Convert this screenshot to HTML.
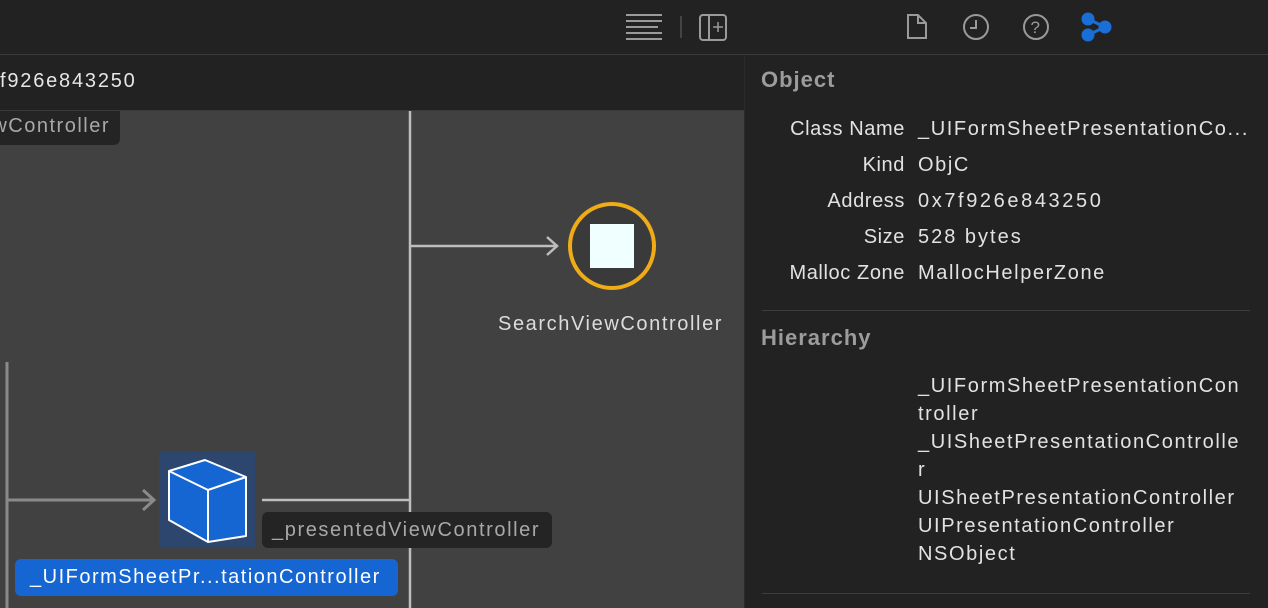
<!DOCTYPE html>
<html><head><meta charset="utf-8"><style>
body{margin:0;width:1268px;height:608px;background:#222;overflow:hidden;position:relative;font-family:"Liberation Sans",sans-serif;letter-spacing:1.5px}
.a{position:absolute}
.lbl{position:absolute;right:363px;text-align:right;color:#e2e2e2;font-size:20px;letter-spacing:0.6px}
.val{position:absolute;left:918px;color:#e2e2e2;font-size:20px;white-space:nowrap;letter-spacing:1.6px}
.h{position:absolute;left:918px;color:#e2e2e2;font-size:20px;line-height:28px;letter-spacing:1.6px;white-space:nowrap}
</style></head><body>
<div class="a" style="left:0;top:0;width:745px;height:54px;background:#222"></div>
<div class="a" style="left:0;top:54px;width:1268px;height:1px;background:#3a3a3a"></div>
<div class="a" style="left:0;top:55px;width:745px;height:55px;background:#222"></div>
<div class="a" style="left:0;top:110px;width:745px;height:1px;background:#3a3a3a"></div>
<div class="a" style="left:0;top:70px;color:#e6e6e6;font-size:20px;letter-spacing:1.8px">f926e843250</div>
<div class="a" style="left:744px;top:55px;width:1px;height:553px;background:#2c2c2c"></div>
<div class="a" style="left:0;top:111px;width:744px;height:497px;background:#414141"></div>
<div class="a" style="left:0;top:111px;width:120px;height:34px;background:#242424;border-radius:0 0 6px 0;color:#a8a8a8;font-size:20px;line-height:30px;text-align:right;padding-right:10px;box-sizing:border-box;overflow:hidden;white-space:nowrap;direction:rtl">wController</div>
<svg class="a" style="left:0;top:0" width="745" height="608">
<g stroke="#9a9a9a" stroke-width="2" fill="none">
<line x1="626" y1="15" x2="662" y2="15"/><line x1="626" y1="21" x2="662" y2="21"/><line x1="626" y1="27" x2="658" y2="27"/><line x1="626" y1="33" x2="662" y2="33"/><line x1="626" y1="39" x2="662" y2="39"/>
<line x1="681" y1="16" x2="681" y2="38" stroke="#444"/>
<rect x="700" y="15" width="26" height="25" rx="3"/><line x1="709" y1="15" x2="709" y2="40"/><line x1="713" y1="27" x2="723" y2="27" stroke-width="1.5"/><line x1="718" y1="22" x2="718" y2="32" stroke-width="1.5"/>
</g>
<line x1="410" y1="111" x2="410" y2="608" stroke="#bdbdbd" stroke-width="2.5"/>
<line x1="410" y1="246" x2="558" y2="246" stroke="#bdbdbd" stroke-width="2.5"/>
<polyline points="547,237 557,246 547,255" stroke="#bdbdbd" stroke-width="2.5" fill="none"/>
<circle cx="612" cy="246" r="42" stroke="#f0ac17" stroke-width="4" fill="#3a3a3a"/>
<rect x="590" y="224" width="44" height="44" fill="#f0ffff"/>
<line x1="7" y1="362" x2="7" y2="608" stroke="#8a8a8a" stroke-width="3"/>
<line x1="7" y1="500" x2="154" y2="500" stroke="#8a8a8a" stroke-width="3"/>
<polyline points="143,490 154,500 143,510" stroke="#8a8a8a" stroke-width="3" fill="none"/>
<line x1="262" y1="500" x2="410" y2="500" stroke="#bdbdbd" stroke-width="2.5"/>
<rect x="159" y="452" width="96" height="96" fill="#1e4a8a" opacity="0.6"/>
<polygon points="169,471 205,460 246,477 246,536 208,542 169,520" fill="#1566d2"/>
<g stroke="#fff" stroke-width="2" fill="none" stroke-linejoin="round"><polygon points="169,471 205,460 246,477 246,536 208,542 169,520"/><polyline points="169,471 208,490 246,477"/><line x1="208" y1="490" x2="208" y2="542"/></g>
</svg>
<div class="a" style="left:498px;top:313px;color:#dcdcdc;font-size:20px;letter-spacing:1.6px;white-space:nowrap">SearchViewController</div>
<div class="a" style="left:262px;top:512px;width:290px;height:36px;background:#242424;border-radius:6px;color:#a8a8a8;font-size:20px;line-height:36px;padding-left:10px;box-sizing:border-box;letter-spacing:1.6px;white-space:nowrap">_presentedViewController</div>
<div class="a" style="left:15px;top:559px;width:383px;height:37px;background:#1566d2;border-radius:6px;color:#fff;font-size:20px;line-height:37px;padding-left:15px;box-sizing:border-box;letter-spacing:1.5px;white-space:nowrap">_UIFormSheetPr...tationController</div>
<svg class="a" style="left:880px;top:0" width="260" height="54">
<g stroke="#9a9a9a" stroke-width="2" fill="none">
<path d="M28 15 H38 L46 23 V38 H28 Z M38 15 V23 H46"/>
<circle cx="96" cy="27" r="12"/><path d="M96 20 V28 H90"/>
<circle cx="156" cy="27" r="12"/>
</g>
<text x="156" y="33" fill="#9a9a9a" font-size="17" text-anchor="middle" font-family="Liberation Sans">?</text>
<g fill="#1a6ed8" stroke="#1a6ed8" stroke-width="3"><line x1="208" y1="19" x2="225" y2="27"/><line x1="208" y1="35" x2="225" y2="27"/><circle cx="208" cy="19" r="5"/><circle cx="208" cy="35" r="5"/><circle cx="225" cy="27" r="5"/></g>
</svg>
<div class="a" style="left:761px;top:67px;color:#9c9c9c;font-size:22px;font-weight:bold;letter-spacing:1px">Object</div>
<div class="lbl" style="top:118px">Class Name</div><div class="val" style="top:118px">_UIFormSheetPresentationCo...</div>
<div class="lbl" style="top:154px">Kind</div><div class="val" style="top:154px">ObjC</div>
<div class="lbl" style="top:190px">Address</div><div class="val" style="top:190px;letter-spacing:2.6px">0x7f926e843250</div>
<div class="lbl" style="top:226px">Size</div><div class="val" style="top:226px;letter-spacing:2px">528 bytes</div>
<div class="lbl" style="top:262px">Malloc Zone</div><div class="val" style="top:262px">MallocHelperZone</div>
<div class="a" style="left:762px;top:310px;width:488px;height:1px;background:#3c3c3c"></div>
<div class="a" style="left:761px;top:325px;color:#9c9c9c;font-size:22px;font-weight:bold;letter-spacing:1px">Hierarchy</div>
<div class="h" style="top:372px">_UIFormSheetPresentationCon<br>troller<br>_UISheetPresentationControlle<br>r<br>UISheetPresentationController<br>UIPresentationController<br>NSObject</div>
<div class="a" style="left:762px;top:593px;width:488px;height:1px;background:#3c3c3c"></div>
</body></html>
